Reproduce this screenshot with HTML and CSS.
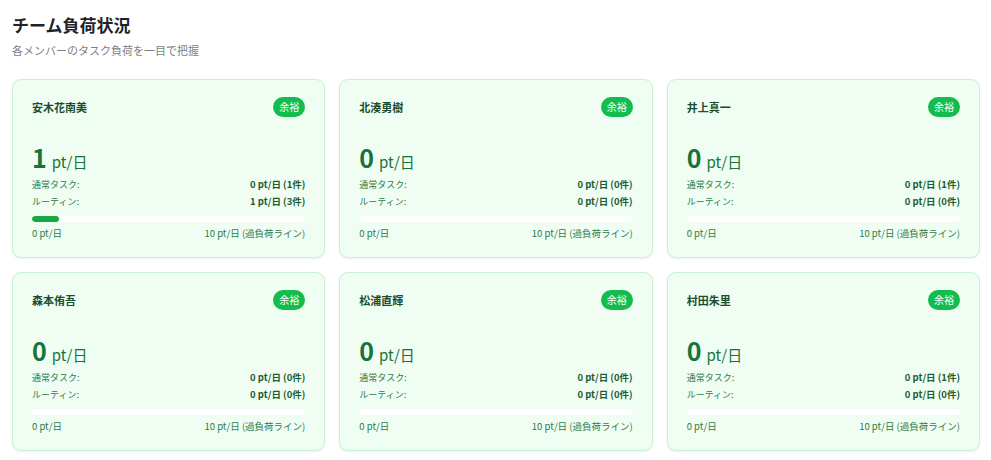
FILE: index.html
```html
<!DOCTYPE html>
<html lang="ja">

<head>
    <meta charset="UTF-8">
    <meta name="viewport" content="width=device-width, initial-scale=1.0">
    <title>チーム負荷状況</title>
    <link rel="stylesheet" href="styles.css">
</head>

<body>
    <div class="page">
        <h1 class="title">チーム負荷状況</h1>
        <p class="subtitle">各メンバーのタスク負荷を一目で把握</p>

        <div class="cards">

            <div class="card">
                <div class="card-head">
                    <span class="name">安木花南美</span>
                    <span class="badge">余裕</span>
                </div>
                <div class="load"><span class="num">1</span><span class="unit">pt/日</span></div>
                <div class="rows">
                    <div class="row"><span>通常タスク:</span><b>0 pt/日 (1件)</b></div>
                    <div class="row"><span>ルーティン:</span><b>1 pt/日 (3件)</b></div>
                </div>
                <div class="bar"><div class="fill" style="width: 10%"></div></div>
                <div class="scale"><span>0 pt/日</span><span>10 pt/日 (過負荷ライン)</span></div>
            </div>

            <div class="card">
                <div class="card-head">
                    <span class="name">北湊勇樹</span>
                    <span class="badge">余裕</span>
                </div>
                <div class="load"><span class="num">0</span><span class="unit">pt/日</span></div>
                <div class="rows">
                    <div class="row"><span>通常タスク:</span><b>0 pt/日 (0件)</b></div>
                    <div class="row"><span>ルーティン:</span><b>0 pt/日 (0件)</b></div>
                </div>
                <div class="bar"><div class="fill" style="width: 0%"></div></div>
                <div class="scale"><span>0 pt/日</span><span>10 pt/日 (過負荷ライン)</span></div>
            </div>

            <div class="card">
                <div class="card-head">
                    <span class="name">井上真一</span>
                    <span class="badge">余裕</span>
                </div>
                <div class="load"><span class="num">0</span><span class="unit">pt/日</span></div>
                <div class="rows">
                    <div class="row"><span>通常タスク:</span><b>0 pt/日 (1件)</b></div>
                    <div class="row"><span>ルーティン:</span><b>0 pt/日 (0件)</b></div>
                </div>
                <div class="bar"><div class="fill" style="width: 0%"></div></div>
                <div class="scale"><span>0 pt/日</span><span>10 pt/日 (過負荷ライン)</span></div>
            </div>

            <div class="card">
                <div class="card-head">
                    <span class="name">森本侑吾</span>
                    <span class="badge">余裕</span>
                </div>
                <div class="load"><span class="num">0</span><span class="unit">pt/日</span></div>
                <div class="rows">
                    <div class="row"><span>通常タスク:</span><b>0 pt/日 (0件)</b></div>
                    <div class="row"><span>ルーティン:</span><b>0 pt/日 (0件)</b></div>
                </div>
                <div class="bar"><div class="fill" style="width: 0%"></div></div>
                <div class="scale"><span>0 pt/日</span><span>10 pt/日 (過負荷ライン)</span></div>
            </div>

            <div class="card">
                <div class="card-head">
                    <span class="name">松浦直輝</span>
                    <span class="badge">余裕</span>
                </div>
                <div class="load"><span class="num">0</span><span class="unit">pt/日</span></div>
                <div class="rows">
                    <div class="row"><span>通常タスク:</span><b>0 pt/日 (0件)</b></div>
                    <div class="row"><span>ルーティン:</span><b>0 pt/日 (0件)</b></div>
                </div>
                <div class="bar"><div class="fill" style="width: 0%"></div></div>
                <div class="scale"><span>0 pt/日</span><span>10 pt/日 (過負荷ライン)</span></div>
            </div>

            <div class="card">
                <div class="card-head">
                    <span class="name">村田朱里</span>
                    <span class="badge">余裕</span>
                </div>
                <div class="load"><span class="num">0</span><span class="unit">pt/日</span></div>
                <div class="rows">
                    <div class="row"><span>通常タスク:</span><b>0 pt/日 (1件)</b></div>
                    <div class="row"><span>ルーティン:</span><b>0 pt/日 (0件)</b></div>
                </div>
                <div class="bar"><div class="fill" style="width: 0%"></div></div>
                <div class="scale"><span>0 pt/日</span><span>10 pt/日 (過負荷ライン)</span></div>
            </div>

        </div>
    </div>
</body>

</html>
```

FILE: styles.css
```css
body {
    margin: 0;
    background: #ffffff;
    font-family: "Noto Sans CJK JP", "Noto Sans", sans-serif;
}

.page {
    padding: 12px 11px 12px 12px;
}

.title {
    margin: 0;
    font-size: 17px;
    line-height: 26px;
    font-weight: 700;
    color: #1f2328;
}

.subtitle {
    margin: 0;
    font-size: 11px;
    line-height: 24px;
    color: #7b7f86;
}

.cards {
    margin-top: 17px;
    display: grid;
    grid-template-columns: repeat(3, 1fr);
    gap: 14px;
}

.card {
    background: #effdf3;
    border: 1px solid #c9f1d6;
    border-radius: 9px;
    box-shadow: 0 1px 3px rgba(0, 80, 30, 0.08);
    padding: 17px 19px 16px;
}

.card-head {
    display: flex;
    justify-content: space-between;
    align-items: center;
    height: 20px;
}

.name {
    font-size: 11px;
    font-weight: 700;
    color: #1a4d2f;
}

.badge {
    background: #13bd4d;
    color: #ffffff;
    font-size: 10px;
    line-height: 20px;
    padding: 0 6px;
    border-radius: 10px;
}

.load {
    margin-top: 24px;
    height: 32px;
    display: flex;
    align-items: baseline;
    color: #17733a;
}

.num {
    font-size: 25px;
    font-weight: 700;
    line-height: 32px;
}

.unit {
    font-size: 15px;
    margin-left: 5px;
}

.rows {
    margin-top: 3px;
}

.row {
    display: flex;
    justify-content: space-between;
    font-size: 9px;
    line-height: 17px;
    color: #2d7a48;
}

.row b {
    font-size: 9.5px;
    color: #1b5e34;
}

.bar {
    margin-top: 6px;
    height: 6px;
    background: #ffffff;
    border-radius: 3px;
    overflow: hidden;
}

.fill {
    height: 100%;
    background: #17a843;
    border-radius: 3px;
}

.scale {
    margin-top: 3px;
    display: flex;
    justify-content: space-between;
    font-size: 9.5px;
    line-height: 16px;
    color: #2d7a48;
}
```
